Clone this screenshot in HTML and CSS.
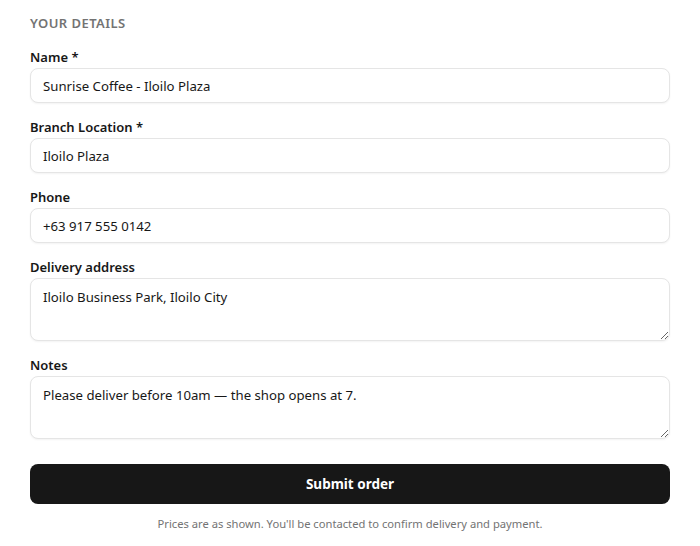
FILE: index.html
```html
<!DOCTYPE html>
<html lang="en">
<head>
    <meta charset="UTF-8">
    <meta name="viewport" content="width=device-width, initial-scale=1.0">
    <title>Your Details</title>
    <link rel="stylesheet" href="styles.css">
</head>
<body>

<form class="order-form">
    <h3 class="section-title">Your details</h3>

    <div class="field">
        <label for="name">Name *</label>
        <input id="name" type="text" value="Sunrise Coffee - Iloilo Plaza">
    </div>

    <div class="field">
        <label for="branch">Branch Location *</label>
        <input id="branch" type="text" value="Iloilo Plaza">
    </div>

    <div class="field">
        <label for="phone">Phone</label>
        <input id="phone" type="text" value="+63 917 555 0142">
    </div>

    <div class="field">
        <label for="address">Delivery address</label>
        <textarea id="address" rows="2">Iloilo Business Park, Iloilo City</textarea>
    </div>

    <div class="field">
        <label for="notes">Notes</label>
        <textarea id="notes" rows="2">Please deliver before 10am — the shop opens at 7.</textarea>
    </div>

    <button type="button" class="submit">Submit order</button>
    <p class="disclaimer">Prices are as shown. You'll be contacted to confirm delivery and payment.</p>
</form>

</body>
</html>
```

FILE: styles.css
```css
* {
    box-sizing: border-box;
    margin: 0;
    padding: 0;
}

body {
    font-family: "Noto Sans", Arial, sans-serif;
    color: #171717;
    background: #fff;
}

.order-form {
    padding: 14px 30px 0;
    display: flex;
    flex-direction: column;
}

.section-title {
    font-size: 13px;
    font-weight: 600;
    text-transform: uppercase;
    letter-spacing: 0.45px;
    color: #737373;
    line-height: 18px;
    margin-bottom: 15px;
}

.field {
    display: flex;
    flex-direction: column;
    margin-bottom: 14px;
}

.field label {
    font-size: 13px;
    font-weight: 600;
    line-height: 20px;
    margin-bottom: 1px;
}

.field input,
.field textarea {
    font-family: inherit;
    font-size: 13.2px;
    color: #171717;
    border: 1px solid #e5e5e5;
    border-radius: 8px;
    padding: 0 12px;
    background: #fff;
    box-shadow: 0 1px 2px rgba(0, 0, 0, 0.05);
    outline: none;
}

.field input {
    height: 35px;
}

.field textarea {
    height: 63px;
    padding-top: 8px;
    line-height: 20px;
    resize: vertical;
}

.submit {
    margin-top: 11px;
    height: 40px;
    border: none;
    border-radius: 8px;
    background: #171717;
    color: #fff;
    font-family: inherit;
    font-size: 13.5px;
    font-weight: 700;
    cursor: pointer;
}

.disclaimer {
    margin-top: 12px;
    text-align: center;
    font-size: 11.2px;
    color: #737373;
}
```
